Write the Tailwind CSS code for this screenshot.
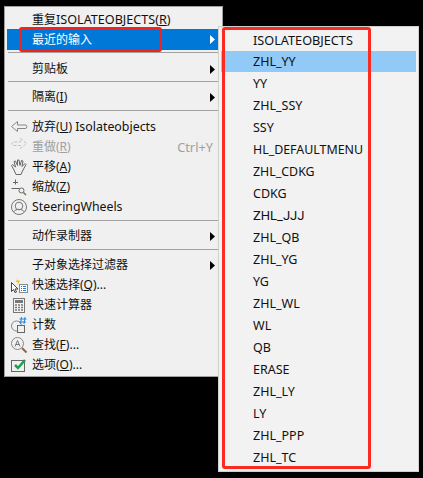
<!doctype html>
<html><head><meta charset="utf-8">
<script src="https://cdn.jsdelivr.net/npm/@tailwindcss/browser@4"></script>
</head>
<body class="bg-black">
<div class="relative w-[423px] h-[478px] overflow-hidden bg-black text-[12px] leading-[20px] text-[#111] font-['Noto_Sans','Noto_Sans_CJK_SC',sans-serif]">
  <div class="absolute left-[4px] top-[6px] w-[219px] h-[371px] bg-[#f0f0f0] border border-[#a0a0a0] pt-[2px] pl-[2px] pr-[2px]">
    <div class="flex h-[20px] items-center pl-[25px] pt-[2px]"><span>重复<span class="text-[12.6px]">ISOLATEOBJECTS(<u>R</u>)</span></span></div>
    <div class="flex h-[21px] items-center pl-[25px] bg-[#0078d7] text-white justify-between pr-[5px]"><span>最近的输入</span><svg width="5" height="9"><path d="M0 0l5 4.500l-5 4.500z" fill="#fff"/></svg></div>
    <div class="h-[9px] pt-[2px]"><div class="h-px bg-[#a0a0a0] ml-px mr-px"></div></div>
    <div class="flex h-[20px] items-center pl-[25px] justify-between pr-[5px]"><span>剪贴板</span><svg width="5" height="9"><path d="M0 0l5 4.500l-5 4.500z" fill="#000"/></svg></div>
    <div class="h-[8px] pt-[2px]"><div class="h-px bg-[#a0a0a0] ml-px mr-px"></div></div>
    <div class="flex h-[20px] items-center pl-[25px] justify-between pr-[5px]"><span>隔离(<u>I</u>)</span><svg width="5" height="9"><path d="M0 0l5 4.500l-5 4.500z" fill="#000"/></svg></div>
    <div class="h-[10px] pt-[3px]"><div class="h-px bg-[#a0a0a0] ml-px mr-px"></div></div>

    <div class="flex h-[20px] items-center"><span class="flex w-[25px] pl-[3px]"><svg width="18" height="14" fill="none" stroke="#888"><path d="M7.500 1.500L1.500 6.500l6 5v-3h8.500l1-2-1-1.500H7.500z"/></svg></span><span>放弃(<u>U</u>) <span class="text-[12.4px]">Isolateobjects</span></span></div>
    <div class="flex h-[20px] items-center justify-between pr-[7px] text-[#a0a0a0]"><span class="flex"><span class="flex w-[25px] pl-[3px]"><svg width="18" height="14" fill="none" stroke="#c0c0c0"><path d="M10.500 1.500l6 5-6 5v-3H3l-1-2 1-1.500h7.500z" stroke-dasharray="3 1.500"/></svg></span><span>重做(<u>R</u>)</span></span><span class="text-[12.8px]">Ctrl+Y</span></div>
    <div class="flex h-[20px] items-center"><span class="flex w-[25px] pl-[3px]"><svg width="18" height="18" fill="none" stroke="#666"><path d="M4 12L1.500 7.500l1-1L5.500 9 4 3.500l1.500-.5L7.500 7.500V2h1.500l1 5.500L11.500 2.500l1.500.5-1 5.500 3-3 1 1-3.500 6.500-1.500 3.500H6z"/></svg></span><span>平移(<u>A</u>)</span></div>
    <div class="flex h-[20px] items-center"><span class="flex w-[25px] pl-[3px]"><svg width="18" height="18" fill="none" stroke="#666"><path d="M1.500 10.500h8M5.500 1.500v5M3 4.500h5"/><circle cx="11.500" cy="12.500" r="2.500"/><path d="M13.500 14.500l2.500 2.500" stroke="#8a6a4a" stroke-width="1.500"/></svg></span><span>缩放(<u>Z</u>)</span></div>
    <div class="flex h-[20px] items-center"><span class="flex w-[25px] pl-[3px]"><svg width="18" height="18" fill="none" stroke="#777"><circle cx="9" cy="9" r="7.500"/><circle cx="9" cy="8" r="3.800"/><path d="M3.500 14c2-3.500 9-3.500 11 0"/></svg></span><span class="text-[12.3px]">SteeringWheels</span></div>
    <div class="h-[9px] pt-[3px]"><div class="h-px bg-[#a0a0a0] ml-px mr-px"></div></div>
    <div class="flex h-[20px] items-center pl-[25px] justify-between pr-[5px]"><span>动作录制器</span><svg width="5" height="9"><path d="M0 0l5 4.500l-5 4.500z" fill="#000"/></svg></div>
    <div class="h-[9px] pt-[3px]"><div class="h-px bg-[#a0a0a0] ml-px mr-px"></div></div>
    <div class="flex h-[20px] items-center pl-[25px] justify-between pr-[5px]"><span>子对象选择过滤器</span><svg width="5" height="9"><path d="M0 0l5 4.500l-5 4.500z" fill="#000"/></svg></div>
    <div class="flex h-[20px] items-center"><span class="flex w-[25px] pl-[3px]"><svg width="18" height="18" fill="none"><path d="M8 1L7 4.500h3L7.500 9l.5-3H6z" fill="#f5b400"/><path d="M1.500 6.500v9l2-2 1.500 3 1.500-.5-1.500-3h3z" fill="#fff" stroke="#444"/><rect x="9.500" y="8.500" width="8" height="8" fill="#fff" stroke="#888"/><path d="M11 10.500h1M13 10.500h3M11 12.500h1M13 12.500h3M11 14.500h1M13 14.500h3" stroke="#1c7fd6"/></svg></span><span>快速选择(<u>Q</u>)...</span></div>
    <div class="flex h-[20px] items-center"><span class="flex w-[25px] pl-[5px]"><svg width="14" height="17" fill="none"><rect x="1.500" y="1.500" width="11" height="14" fill="#f4f4f4" stroke="#777"/><rect x="3" y="3" width="8" height="3" fill="#777"/><path d="M3 8h2M6 8h2M9 8h2M3 10.500h2M6 10.500h2M9 10.500h2M3 13h2M6 13h2M9 13h2" stroke="#777" stroke-width="1.500"/></svg></span><span>快速计算器</span></div>
    <div class="flex h-[20px] items-center"><span class="flex w-[25px] pl-[3px]"><svg width="18" height="18" fill="none"><circle cx="6.500" cy="10" r="5" stroke="#888"/><rect x="7.500" y="9.500" width="7" height="7" fill="#f0f0f0" stroke="#666"/><path d="M11.500 1l-1 7M15 1l-1 7M9.500 3h7M9 6h7" stroke="#1c86e0"/></svg></span><span>计数</span></div>
    <div class="flex h-[20px] items-center"><span class="flex w-[25px] pl-[3px]"><svg width="18" height="18" fill="none"><circle cx="7.500" cy="7.500" r="6" stroke="#888"/><path d="M5 10.500l2.500-6 2.500 6M5.800 8.500h3.400" stroke="#777"/><path d="M12 12l4.500 4.500" stroke="#8a6a4a" stroke-width="2"/></svg></span><span>查找(<u>F</u>)...</span></div>
    <div class="flex h-[20px] items-center"><span class="flex w-[25px] pl-[3px]"><svg width="18" height="16" fill="none"><rect x="1.500" y="3.500" width="13" height="11" fill="#f0f0f0" stroke="#666"/><path d="M5 8l3 3 7-8" stroke="#19a349" stroke-width="2.500"/></svg></span><span>选项(<u>O</u>)...</span></div>
  </div>

  <div class="absolute left-[218px] top-[26px] w-[201px] h-[446px] bg-[#f2f2f2] border border-[#d0d0d0] pt-[2px] pr-[2px] pl-[2px] text-[12.5px]">
    <div class="h-[22px] flex items-center pl-[32px] text-[12.7px]">ISOLATEOBJECTS</div>
    <div class="h-[21px] mb-px flex items-center pl-[32px] bg-[#91c9f7]">ZHL_YY</div>
    <div class="h-[22px] flex items-center pl-[32px]">YY</div>
    <div class="h-[22px] flex items-center pl-[32px]">ZHL_SSY</div>
    <div class="h-[22px] flex items-center pl-[32px]">SSY</div>
    <div class="h-[22px] flex items-center pl-[32px] text-[12.4px]">HL_DEFAULTMENU</div>
    <div class="h-[22px] flex items-center pl-[32px] text-[12.4px]">ZHL_CDKG</div>
    <div class="h-[22px] flex items-center pl-[32px]">CDKG</div>
    <div class="h-[22px] flex items-center pl-[32px] font-['Roboto','Noto_Sans',sans-serif] text-[13px]">ZHL_JJJ</div>
    <div class="h-[22px] flex items-center pl-[32px]">ZHL_QB</div>
    <div class="h-[22px] flex items-center pl-[32px]">ZHL_YG</div>
    <div class="h-[22px] flex items-center pl-[32px]">YG</div>
    <div class="h-[22px] flex items-center pl-[32px]">ZHL_WL</div>
    <div class="h-[22px] flex items-center pl-[32px]">WL</div>
    <div class="h-[22px] flex items-center pl-[32px]">QB</div>
    <div class="h-[22px] flex items-center pl-[32px]">ERASE</div>
    <div class="h-[22px] flex items-center pl-[32px]">ZHL_LY</div>
    <div class="h-[22px] flex items-center pl-[32px]">LY</div>
    <div class="h-[22px] flex items-center pl-[32px]">ZHL_PPP</div>
    <div class="h-[22px] flex items-center pl-[32px]">ZHL_TC</div>
  </div>

  <div class="absolute left-[19px] top-[27px] w-[143px] h-[25px] border-[2px] border-[#f5211d] rounded-[3px]"></div>
  <div class="absolute left-[222px] top-[27px] w-[149px] h-[442px] border-[3px] border-[#fb2b21] rounded-[3px]"></div>
</div>
</body></html>
